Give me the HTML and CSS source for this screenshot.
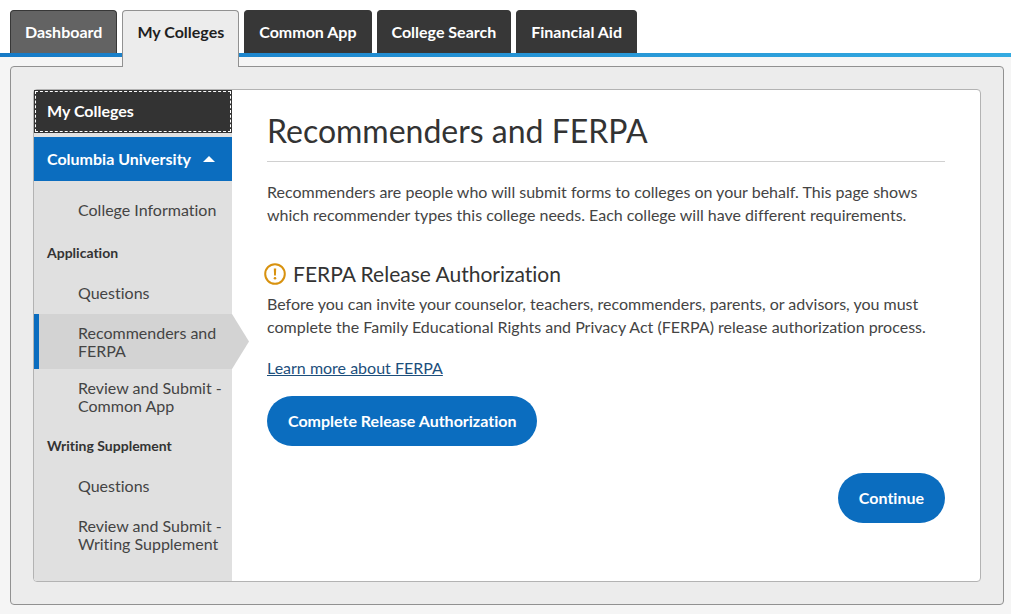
FILE: index.html
```html
<!DOCTYPE html>
<html lang="en">
<head>
    <meta charset="UTF-8">
    <meta name="viewport" content="width=device-width, initial-scale=1.0">
    <title>Recommenders and FERPA</title>
    <link rel="stylesheet" href="styles.css">
</head>
<body>
    <!-- Main tabs -->
    <header class="header">
        <nav class="tabs" aria-label="Main">
            <a class="tab tab-hover" href="#">Dashboard</a>
            <a class="tab tab-active" href="#" aria-current="page">My Colleges</a>
            <a class="tab" href="#">Common App</a>
            <a class="tab" href="#">College Search</a>
            <a class="tab" href="#">Financial Aid</a>
        </nav>
    </header>

    <div class="panel">
        <div class="card">
            <!-- College menu -->
            <nav class="sidebar" aria-label="Colleges">
                <a class="sidebar-title" href="#">My Colleges</a>
                <button class="college" type="button" aria-expanded="true">
                    Columbia University
                    <svg class="caret" width="12" height="6" viewBox="0 0 12 6" aria-hidden="true"><path d="M6 0L12 6H0Z" fill="#fff"/></svg>
                </button>
                <div class="menu">
                    <a class="menu-item" href="#">College Information</a>
                    <h3 class="menu-heading">Application</h3>
                    <a class="menu-item" href="#">Questions</a>
                    <a class="menu-item menu-item-active" href="#" aria-current="page">Recommenders and FERPA</a>
                    <a class="menu-item" href="#">Review and Submit - Common App</a>
                    <h3 class="menu-heading">Writing Supplement</h3>
                    <a class="menu-item" href="#">Questions</a>
                    <a class="menu-item" href="#">Review and Submit - Writing Supplement</a>
                </div>
            </nav>

            <main class="content">
                <h1>Recommenders and FERPA</h1>
                <p>Recommenders are people who will submit forms to colleges on your behalf. This page shows which recommender types this college needs. Each college will have different requirements.</p>

                <section class="ferpa">
                    <h2>
                        <svg class="warning" width="22" height="22" viewBox="0 0 22 22" aria-hidden="true">
                            <circle cx="11" cy="11" r="9.8" fill="none" stroke="#d8920f" stroke-width="2"/>
                            <path d="M9.8 5.5h2.4l-.3 7h-1.8z" fill="#d8920f"/>
                            <circle cx="11" cy="15.2" r="1.3" fill="#d8920f"/>
                        </svg>
                        FERPA Release Authorization
                    </h2>
                    <p>Before you can invite your counselor, teachers, recommenders, parents, or advisors, you must complete the Family Educational Rights and Privacy Act (FERPA) release authorization process.</p>
                    <a class="link" href="#">Learn more about FERPA</a>
                    <button class="button" type="button">Complete Release Authorization</button>
                </section>

                <div class="actions">
                    <button class="button" type="button">Continue</button>
                </div>
            </main>
        </div>
    </div>
</body>
</html>
```

FILE: styles.css
```css
* {
    box-sizing: border-box;
}

body {
    margin: 0;
    background-color: #f5f5f5;
    color: #333;
    font-family: Lato, sans-serif;
    font-size: 16px;
    font-variant-ligatures: none;
    line-height: 23px;
}

h1, h2, h3, p {
    margin: 0;
}

button {
    border: none;
    font-family: inherit;
    font-variant-ligatures: inherit;
    cursor: pointer;
}

/* tabs */
.header {
    padding: 10px 10px 0;
    background: linear-gradient(to right, #167ac6, #33aae1) bottom / 100% 4px no-repeat #fff;
}

.tabs {
    display: flex;
    gap: 5px;
    height: 47px;
}

.tab {
    height: 43px;
    padding: 9px 14px;
    border: 1px solid #373737;
    border-bottom: none;
    border-radius: 4px 4px 0 0;
    background-color: #373737;
    color: #fff;
    font-weight: 700;
    text-decoration: none;
}

.tab-hover {
    background-color: #636363;
}

.tab-active {
    position: relative;
    height: 57px;
    border-color: #919191;
    background-color: #ececec;
    color: #1f1f1f;
}

/* panel */
.panel {
    margin: 9px 7px 9px 10px;
    padding: 22px;
    border: 1px solid #919191;
    border-radius: 4px;
    background-color: #ececec;
}

.card {
    display: flex;
    border: 1px solid #b3b3b3;
    border-radius: 4px;
    background-color: #fff;
}

/* sidebar */
.sidebar {
    flex: 0 0 198px;
    border-radius: 3px 0 0 3px;
    background-color: #e0e0e0;
}

.sidebar-title {
    display: block;
    margin-bottom: 4px;
    padding: 9px 13px 11px;
    outline: 1px dashed #fff;
    outline-offset: -2px;
    background-color: #333;
    color: #fff;
    font-weight: 700;
    text-decoration: none;
}

.college {
    display: flex;
    align-items: center;
    justify-content: space-between;
    width: 100%;
    height: 44px;
    padding: 0 17px 2px 13px;
    background-color: #0b6dbf;
    color: #fff;
    font-size: 16px;
    font-weight: 700;
}

.caret {
    margin-top: 2px;
}

.menu {
    padding: 10px 0 19px;
}

.menu-item {
    display: block;
    min-height: 40px;
    padding: 10px 8px 9px 44px;
    color: #444;
    line-height: 18px;
    text-decoration: none;
}

.menu-item-active {
    position: relative;
    padding-left: 39px;
    border-left: 5px solid #0b6dbf;
    background-color: #d3d3d3;
}

.menu-item-active::after {
    content: "";
    position: absolute;
    top: 0;
    left: 100%;
    width: 17px;
    height: 100%;
    background-color: #d3d3d3;
    clip-path: polygon(0 0, 100% 50%, 0 100%);
}

.menu-heading {
    padding: 13px 13px 12px;
    font-size: 14px;
    line-height: 18px;
}

/* content */
.content {
    flex: 1;
    padding: 19px 35px 58px;
}

.content p {
    color: #444;
}

h1 {
    margin-bottom: 18px;
    padding-bottom: 8px;
    border-bottom: 1px solid #d0d0d0;
    font-size: 32px;
    font-weight: 400;
    line-height: 44px;
}

.ferpa {
    display: flex;
    flex-direction: column;
    align-items: flex-start;
    margin-top: 36px;
}

h2 {
    display: flex;
    align-items: center;
    gap: 7px;
    margin-bottom: 6px;
    font-size: 21px;
    font-weight: 400;
    line-height: 24px;
}

.warning {
    margin-left: -3px;
}

.link {
    margin: 18px 0 17px;
    color: #1d4f7c;
}

.button {
    padding: 13px 21px 14px;
    border-radius: 26px;
    background-color: #0b6dbf;
    color: #fff;
    font-size: 16px;
    font-weight: 700;
    line-height: 23px;
}

.actions {
    display: flex;
    justify-content: flex-end;
    margin-top: 27px;
}
```
